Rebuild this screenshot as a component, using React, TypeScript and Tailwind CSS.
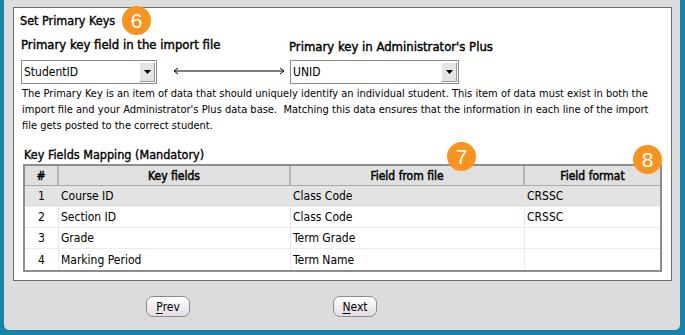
const font = { fontFamily: '"DejaVu Sans Condensed", "DejaVu Sans", sans-serif' }

function Badge({ n, className }: { n: string; className: string }) {
    return (
        <div
            className={`absolute w-[29px] h-[29px] rounded-full bg-[#f7931e] text-white flex items-center justify-center text-[21px] leading-none ${className}`}
            style={{ fontFamily: '"Liberation Sans", Arial, sans-serif' }}
        >
            {n}
        </div>
    )
}

function Select({ value, width }: { value: string; width: string }) {
    return (
        <div className={`${width} h-[24px] flex items-stretch border border-[#8a8a8a] bg-white`}>
            <div className="flex-1 flex items-center pl-[2px] text-[12px] text-black">{value}</div>
            <div className="w-[16px] my-[1px] mr-[1px] bg-[#e4e4e4] border border-t-white border-l-white border-r-[#9a9a9a] border-b-[#9a9a9a] flex items-center justify-center">
                <svg width="7" height="4" viewBox="0 0 7 4">
                    <path d="M0 0h7L3.5 4z" fill="#000" />
                </svg>
            </div>
        </div>
    )
}

const rows = [
    { n: '1', key: 'Course ID', file: 'Class Code', fmt: 'CRSSC', sel: true },
    { n: '2', key: 'Section ID', file: 'Class Code', fmt: 'CRSSC', sel: false },
    { n: '3', key: 'Grade', file: 'Term Grade', fmt: '', sel: false },
    { n: '4', key: 'Marking Period', file: 'Term Name', fmt: '', sel: false },
]

function NavButton({ first, rest }: { first: string; rest: string }) {
    return (
        <button className="w-[44px] h-[21px] rounded-[7px] border border-[#8c8c8c] bg-gradient-to-b from-white to-[#e6dce6] text-[12px] text-black leading-none flex items-center justify-center">
            <span className="underline underline-offset-2">{first}</span>
            {rest}
        </button>
    )
}

export default function App() {
    return (
        <div className="w-[685px] h-[335px] bg-[#1784a8] overflow-hidden" style={font}>
            <div className="ml-[4px] mr-[5px] h-[330px] bg-[#dcdcdc] rounded-b-[5px] pt-[7px] pl-[9px] pr-[8px]">
                {/* Main panel */}
                <div className="relative h-[274px] bg-white border border-[#6b6b6b] pl-[6px]">
                    <Badge n="6" className="left-[108px] top-[-2px]" />
                    <Badge n="7" className="left-[433px] top-[134px]" />
                    <Badge n="8" className="left-[619px] top-[137px]" />

                    <div className="mt-[5px] h-[16px] leading-[16px] text-[12.5px] text-black [-webkit-text-stroke:0.35px_black]">Set Primary Keys</div>

                    <div className="flex items-end mt-[8px]">
                        <div className="flex flex-col ml-[1px] w-[152px]">
                            <div className="h-[16px] leading-[16px] text-[13px] text-black whitespace-nowrap mb-[7px] [-webkit-text-stroke:0.4px_black]">
                                Primary key field in the import file
                            </div>
                            <Select value="StudentID" width="w-[136px]" />
                        </div>
                        <svg className="mb-[9px]" width="112" height="8" viewBox="0 0 112 8">
                            <path d="M1 4h110M5 1L1 4l4 3M107 1l4 3-4 3" stroke="#000" strokeWidth="1" fill="none" />
                        </svg>
                        <div className="flex flex-col ml-[5px]">
                            <div className="h-[16px] leading-[16px] text-[13px] text-black whitespace-nowrap mb-[5px] -ml-[1px] [-webkit-text-stroke:0.4px_black]">
                                Primary key in Administrator's Plus
                            </div>
                            <Select value="UNID" width="w-[169px]" />
                        </div>
                    </div>

                    <p className="mt-[2px] ml-[2px] text-[11px] leading-[16px] text-black">
                        The Primary Key is an item of data that should uniquely identify an individual student. This item of data must exist in both the
                        <br />
                        import file and your Administrator's Plus data base.&nbsp; Matching this data ensures that the information in each line of the import
                        <br />
                        file gets posted to the correct student.
                    </p>

                    <div className="mt-[13px] ml-[4px] h-[16px] leading-[16px] text-[12.5px] text-black [-webkit-text-stroke:0.35px_black]">Key Fields Mapping (Mandatory)</div>

                    {/* Mapping table */}
                    <div className="mt-[1px] ml-[3px] w-[639px] border-2 border-[#8e8e8e] text-[12px] text-black">
                        <div className="grid grid-cols-[34px_232px_234px_1fr] h-[20px] bg-[#e0e0e0] border-b border-[#a8a8a8] [-webkit-text-stroke:0.45px_black]">
                            <div className="flex items-center justify-center border-r-2 border-r-[#b4b4b4]">#</div>
                            <div className="flex items-center justify-center border-r-2 border-r-[#b4b4b4]">Key fields</div>
                            <div className="flex items-center justify-center border-r-2 border-r-[#b4b4b4]">Field from file</div>
                            <div className="flex items-center justify-center">Field format</div>
                        </div>
                        {rows.map((r) => (
                            <div
                                key={r.n}
                                className={`grid grid-cols-[34px_232px_234px_1fr] h-[21px] border-b border-[#ececec] last:border-b-0 ${r.sel ? 'bg-[#e3e3e3]' : 'bg-white'}`}
                            >
                                <div className="flex items-center justify-center border-r border-[#e8e8e8]">{r.n}</div>
                                <div className="flex items-center pl-[2px] border-r border-[#e8e8e8]">{r.key}</div>
                                <div className="flex items-center pl-[2px] border-r border-[#e8e8e8]">{r.file}</div>
                                <div className="flex items-center pl-[2px]">{r.fmt}</div>
                            </div>
                        ))}
                    </div>
                </div>

                {/* Navigation */}
                <div className="flex mt-[15px] pl-[133px] gap-[143px]">
                    <NavButton first="P" rest="rev" />
                    <NavButton first="N" rest="ext" />
                </div>
            </div>
        </div>
    )
}
